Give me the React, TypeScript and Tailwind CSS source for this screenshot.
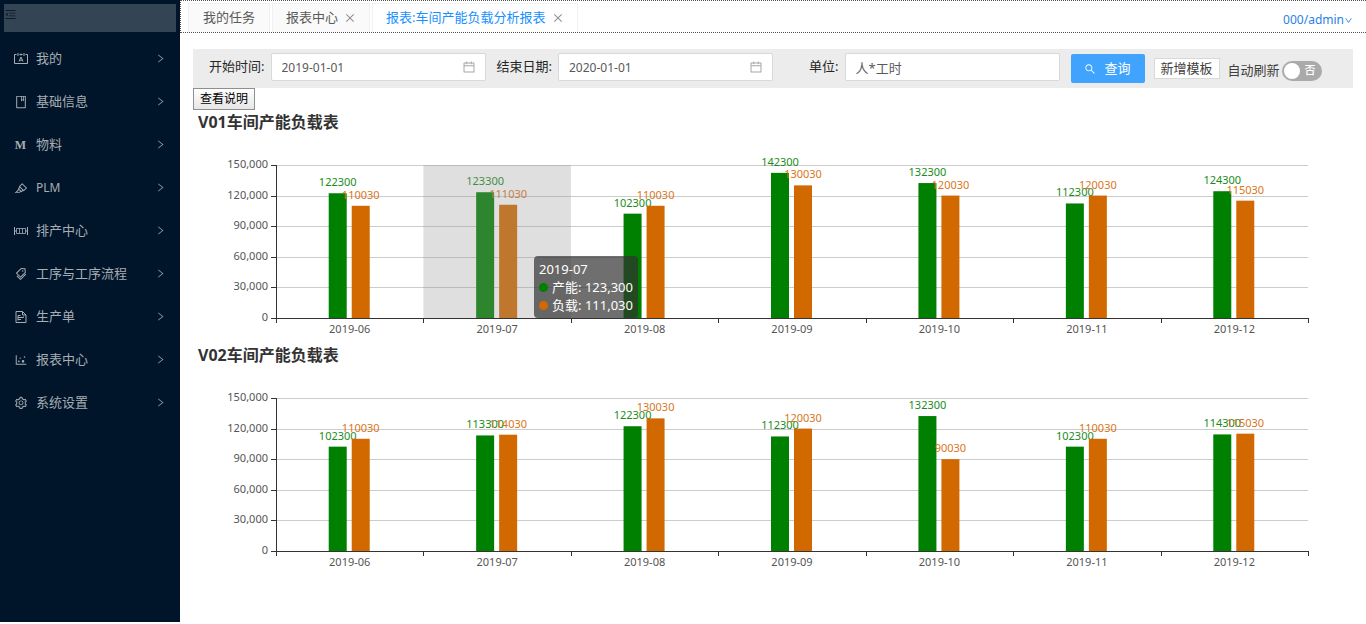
import { useState } from "react";
import {
  AiOutlineBook,
  AiOutlineCalendar,
  AiOutlineClose,
  AiOutlineDotChart,
  AiOutlineDown,
  AiOutlineHighlight,
  AiOutlineMenuFold,
  AiOutlineRight,
  AiOutlineSearch,
  AiOutlineSetting,
  AiOutlineTags,
} from "react-icons/ai";

const months = ["2019-06", "2019-07", "2019-08", "2019-09", "2019-10", "2019-11", "2019-12"];
const ticks = [0, 30000, 60000, 90000, 120000, 150000];

const PLOT_TOP = 31;
const PLOT_HEIGHT = 153;
const BASE = PLOT_TOP + PLOT_HEIGHT;

const charts = [
  {
    title: "V01车间产能负载表",
    capacity: [122300, 123300, 102300, 142300, 132300, 112300, 124300],
    load: [110030, 111030, 110030, 130030, 120030, 120030, 115030],
    active: 1,
  },
  {
    title: "V02车间产能负载表",
    capacity: [102300, 113300, 122300, 112300, 132300, 102300, 114300],
    load: [110030, 114030, 130030, 120030, 90030, 110030, 115030],
    active: -1,
  },
];

function CardIcon() {
  return (
    <svg width="14" height="14" viewBox="0 0 14 14" fill="none" stroke="currentColor">
      <path d="M2.5 2.5h-2v9h13v-9h-2M5.5 2.5h3M4 1v3M7 1.5v2M10 1v3" />
      <path d="M5 9.5 7 5l2 4.5M5.8 8.2h2.4" />
    </svg>
  );
}

function ScheduleIcon() {
  return (
    <svg width="14" height="14" viewBox="0 0 14 14" fill="none" stroke="currentColor">
      <path d="M.5 3v8M13.5 3v8M.5 7h2M11.5 7h2" />
      <path d="M2.5 4.5h9v5h-9zM5.5 4.5v5M8.5 4.5v5" strokeOpacity="0.8" />
    </svg>
  );
}

function FileIcon() {
  return (
    <svg width="14" height="14" viewBox="0 0 14 14" fill="none" stroke="currentColor">
      <path d="M2 1.5h6.5L12 5v7.5H2z" />
      <path d="M8.5 1.5V5H12" />
      <path d="M4 5.5h2.5M4 7.5h5.5v-1M4 9.5h3M4 5.5v5" />
    </svg>
  );
}

const menu = [
  { label: "我的", icon: <CardIcon /> },
  { label: "基础信息", icon: <AiOutlineBook size={14} /> },
  { label: "物料", icon: <span className="font-['Liberation_Serif',serif] text-xs font-bold">M</span> },
  { label: "PLM", icon: <AiOutlineHighlight size={14} />, latin: true },
  { label: "排产中心", icon: <ScheduleIcon /> },
  { label: "工序与工序流程", icon: <AiOutlineTags size={14} /> },
  { label: "生产单", icon: <FileIcon /> },
  { label: "报表中心", icon: <AiOutlineDotChart size={14} /> },
  { label: "系统设置", icon: <AiOutlineSetting size={14} /> },
];

function Sidebar() {
  return (
    <aside className="w-[180px] shrink-0 bg-[#001529] text-[#a6adb4]">
      <div className="p-1">
        <button aria-label="折叠菜单" className="flex h-7 w-full items-start bg-[#334454] pt-1 text-[#0b1c2c]">
          <AiOutlineMenuFold size={13} />
        </button>
      </div>
      <nav className="pt-px">
        {menu.map((item) => (
          <a key={item.label} href="#" className="flex h-[43px] items-center pr-3.5 pl-[13px] text-[13px]">
            <span className="flex w-[15px] justify-center">{item.icon}</span>
            <span className={item.latin ? "ml-2 flex-1 text-xs" : "ml-2 flex-1"}>{item.label}</span>
            <AiOutlineRight size={11} className="text-[#8b949d]" />
          </a>
        ))}
      </nav>
    </aside>
  );
}

function Header() {
  return (
    <header className="flex h-[33px] items-end border-y border-l border-dotted border-[#555] pl-[7px]">
      <div className="flex gap-0.5 text-[13px] text-[#595959]">
        <button className="h-[29px] border border-b-0 border-[#f0f0f0] bg-[#fafafa] px-3.5">我的任务</button>
        <button className="flex h-[29px] items-center gap-1.5 border border-b-0 border-[#f0f0f0] bg-[#fafafa] px-[13px]">
          报表中心
          <AiOutlineClose size={12} className="text-[#8c8c8c]" />
        </button>
        <button className="flex h-[29px] items-center gap-1.5 border border-b-0 border-[#f0f0f0] bg-white px-[13px] text-[#1890ff]">
          报表:车间产能负载分析报表
          <AiOutlineClose size={12} className="text-[#8c8c8c]" />
        </button>
      </div>
      <a href="#" className="mr-[13px] ml-auto flex h-6 items-center text-xs text-[#2a82e4]">
        000/admin
        <AiOutlineDown size={9} />
      </a>
    </header>
  );
}

function Field({ id, label, value, date }: { id: string; label: string; value: string; date?: boolean }) {
  return (
    <>
      <label htmlFor={id} className="shrink-0 pb-[3px] text-[13px] text-[#262626]">
        {label}:
      </label>
      <div className="ml-1.5 max-w-[215px] min-w-0 flex-1 pb-[3px]">
        <div className="relative">
          <input
            id={id}
            type="text"
            defaultValue={value}
            className={`block h-7 w-full rounded-xs border border-[#d9d9d9] bg-white px-2.5 text-[#595959] ${
              date ? "text-xs" : "text-[13px]"
            }`}
          />
          {date && <AiOutlineCalendar size={14} className="absolute top-[7px] right-2.5 text-[#a6a6a6]" />}
        </div>
      </div>
    </>
  );
}

function Toolbar() {
  const [auto, setAuto] = useState(false);

  return (
    <form className="flex h-[39px] items-center bg-[#ececec] pl-4">
      <Field id="start" label="开始时间" value="2019-01-01" date />
      <span className="w-[11px] shrink-0" />
      <Field id="end" label="结束日期" value="2020-01-01" date />
      <span className="w-9 shrink-0" />
      <Field id="unit" label="单位" value="人*工时" />
      <button
        type="button"
        className="ml-[11px] flex h-[29px] w-[74px] shrink-0 items-center justify-center gap-2 rounded-xs bg-[#40a4ff] text-[13px] text-white"
      >
        <AiOutlineSearch size={12} />
        查询
      </button>
      <button
        type="button"
        className="ml-[9px] h-[21px] shrink-0 border border-[#d9d9d9] bg-white px-1.5 text-[13px] leading-[19px] text-[#404040]"
      >
        新增模板
      </button>
      <label className="ml-2 flex shrink-0 items-center gap-0.5 pt-1 text-[13px] text-[#404040]">
        自动刷新
        <input
          type="checkbox"
          role="switch"
          checked={auto}
          onChange={() => setAuto(!auto)}
          className="peer sr-only"
        />
        <span className="flex h-5 w-10 items-center justify-between rounded-full bg-[#aaaaaa] pr-1.5 pl-0.5 text-[11px] font-medium text-white peer-checked:flex-row-reverse peer-checked:bg-[#40a4ff]">
          <span className="h-4 w-4 rounded-full bg-white" />
          {auto ? "是" : "否"}
        </span>
      </label>
    </form>
  );
}

function Bar({ x, value, color, text }: { x: number; value: number; color: string; text: string }) {
  const h = (value / 150000) * PLOT_HEIGHT;
  return (
    <>
      <rect x={x} y={BASE - h} width={18} height={h} fill={color} />
      <text x={x + 9} y={BASE - h - 7} textAnchor="middle" fill={text}>
        {value}
      </text>
    </>
  );
}

function Chart({ title, capacity, load, active }: (typeof charts)[number]) {
  const step = 100 / months.length;

  return (
    <section>
      <h2 className="pl-[5px] text-base leading-6 font-bold text-[#333]">{title}</h2>
      <div className="relative mr-[45px] ml-[83px]">
        <svg className="block h-[209px] w-full overflow-visible text-[11px]">
          {ticks.map((t) => {
            const y = Math.round(BASE - (t / 150000) * PLOT_HEIGHT);
            return (
              <g key={t} shapeRendering="crispEdges">
                {t > 0 && <rect x="0" y={y} width="100%" height="1" fill="#ccc" />}
                <rect x="-5" y={y} width="5" height="1" fill="#333" />
                <text x="-8" y={y + 3} textAnchor="end" fill="#555">
                  {t.toLocaleString("en-US")}
                </text>
              </g>
            );
          })}
          {months.map((m, i) => (
            <svg key={m} x={`${(i + 0.5) * step}%`} className="overflow-visible">
              <Bar x={-21} value={capacity[i]} color="#008000" text="#1a8c1a" />
              <Bar x={2} value={load[i]} color="#d26900" text="#d9771a" />
              <text x="0" y={BASE + 15} textAnchor="middle" fill="#555">
                {m}
              </text>
            </svg>
          ))}
          {active >= 0 && (
            <rect
              x={`${active * step}%`}
              y={PLOT_TOP}
              width={`${step}%`}
              height={PLOT_HEIGHT}
              fill="rgba(150,150,150,0.3)"
            />
          )}
          <g fill="#333" shapeRendering="crispEdges">
            <rect x="0" y={PLOT_TOP} width="1" height={PLOT_HEIGHT} />
            <rect x="0" y={BASE} width="100%" height="1" />
            {[...months, "end"].map((m, i) => (
              <rect key={m} x={`${i * step}%`} y={BASE} width="1" height="5" />
            ))}
          </g>
        </svg>
        {active >= 0 && (
          <div className="absolute top-[122px] left-1/4 rounded bg-[rgba(50,50,50,0.7)] px-[5px] py-1 text-[13px] leading-[18px] whitespace-nowrap text-white">
            <div>{months[active]}</div>
            <div className="flex items-center">
              <span className="mr-1 h-[9px] w-[9px] rounded-full bg-[#008000]" />
              产能: {capacity[active].toLocaleString("en-US")}
            </div>
            <div className="flex items-center">
              <span className="mr-1 h-[9px] w-[9px] rounded-full bg-[#d26900]" />
              负载: {load[active].toLocaleString("en-US")}
            </div>
          </div>
        )}
      </div>
    </section>
  );
}

export default function App() {
  return (
    <div className="flex min-h-screen bg-white pb-0.5 font-['Noto_Sans','Noto_Sans_CJK_SC',sans-serif]">
      <Sidebar />
      <div className="min-w-0 flex-1">
        <Header />
        <main className="mt-4 px-[13px]">
          <Toolbar />
          <button className="block h-[22px] border border-[#8f8f8f] bg-linear-to-b from-white to-[#e6e6e6] px-1.5 text-xs text-black">
            查看说明
          </button>
          {charts.map((c) => (
            <Chart key={c.title} {...c} />
          ))}
        </main>
      </div>
    </div>
  );
}
